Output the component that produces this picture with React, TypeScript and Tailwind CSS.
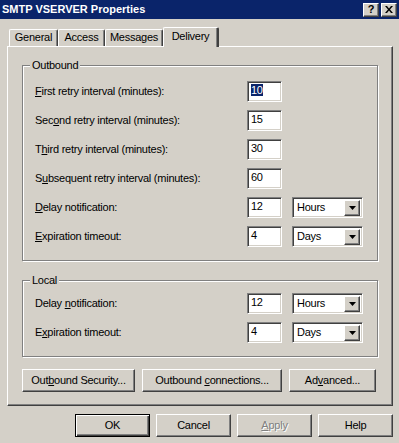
import React from 'react';

const raised =
  'border border-t-white border-l-white border-r-[#404040] border-b-[#404040] shadow-[inset_-1px_-1px_0_#808080]';
const sunken =
  'border border-t-[#808080] border-l-[#808080] border-r-white border-b-white shadow-[inset_1px_1px_0_#404040,inset_-1px_-1px_0_#d4d0c8]';

function U({ children }: { children: React.ReactNode }) {
  return <span className="underline underline-offset-[1px]">{children}</span>;
}

function TextBox({ value, selected }: { value: string; selected?: boolean }) {
  return (
    <div className={`w-[35px] h-[21px] bg-white pl-[3px] pt-[2px] leading-[12px] ${sunken}`}>
      <span className={selected ? 'bg-[#0a246a] text-white' : ''}>{value}</span>
    </div>
  );
}

function Combo({ value }: { value: string }) {
  return (
    <div className={`w-[71px] h-[21px] bg-white flex items-center justify-between pl-[4px] pr-[2px] ${sunken}`}>
      <span>{value}</span>
      <div className={`w-[16px] h-[16px] bg-[#d4d0c8] flex items-center justify-center ${raised}`}>
        <svg width="7" height="4" viewBox="0 0 7 4">
          <path d="M0 0h7L3.5 4z" fill="#000" />
        </svg>
      </div>
    </div>
  );
}

function Row({ label, value, unit, selected }: { label: React.ReactNode; value: string; unit?: string; selected?: boolean }) {
  return (
    <div className="flex items-center h-[21px]">
      <div className="w-[224px] pl-[12px]">{label}</div>
      <TextBox value={value} selected={selected} />
      {unit && (
        <div className="ml-[10px]">
          <Combo value={unit} />
        </div>
      )}
    </div>
  );
}

function GroupBox({ title, className, children }: { title: string; className: string; children: React.ReactNode }) {
  return (
    <div className={`relative w-[356px] border border-[#808080] shadow-[inset_1px_1px_0_#fff,1px_1px_0_#fff] ${className}`}>
      <span className="absolute -top-[8px] left-[7px] px-[2px] bg-[#d4d0c8] leading-[14px]">{title}</span>
      {children}
    </div>
  );
}

function Button({ children, w, isDefault, disabled }: { children: React.ReactNode; w: string; isDefault?: boolean; disabled?: boolean }) {
  const cls = isDefault
    ? 'border border-black shadow-[inset_1px_1px_0_#fff,inset_-1px_-1px_0_#404040,inset_-2px_-2px_0_#808080]'
    : raised;
  return (
    <div className={`${w} h-[23px] flex items-center justify-center bg-[#d4d0c8] ${cls}`}>
      <span className={disabled ? 'text-[#808080] [text-shadow:1px_1px_0_#fff]' : ''}>{children}</span>
    </div>
  );
}

function Tab({ label, w, active }: { label: string; w: string; active?: boolean }) {
  if (active) {
    return (
      <div
        className={`relative z-10 ${w} h-[20px] -mb-[1px] bg-[#d4d0c8] border-l border-t border-white border-r-2 border-r-[#404040] shadow-[inset_-1px_0_0_#808080] rounded-tl-[2px] rounded-tr-[2px] flex justify-center pt-[2px]`}
      >
        {label}
      </div>
    );
  }
  return (
    <div
      className={`${w} h-[17px] bg-[#d4d0c8] border-l border-t border-white border-r border-r-[#404040] shadow-[inset_-1px_0_0_#808080] rounded-tl-[2px] rounded-tr-[2px] flex justify-center pt-[1px]`}
    >
      {label}
    </div>
  );
}

export default function App() {
  return (
    <div className="w-[399px] h-[443px] bg-[#d4d0c8] overflow-hidden text-[11px] leading-[13px] text-black font-['Liberation_Sans',Arial,sans-serif] tracking-[-0.25px]">
      {/* Title bar */}
      <div className="h-[19px] bg-[#0a246a] flex items-center justify-between pl-[2px] pr-[2px]">
        <span className="text-white font-bold text-[11px] tracking-normal">SMTP VSERVER Properties</span>
        <div className="flex gap-[2px]">
          <div className={`w-[16px] h-[14px] bg-[#d4d0c8] flex items-center justify-center font-bold text-[11px] ${raised}`}>?</div>
          <div className={`w-[16px] h-[14px] bg-[#d4d0c8] flex items-center justify-center ${raised}`}>
            <svg width="8" height="7" viewBox="0 0 8 7">
              <path d="M0 0h2l2 2.5L6 0h2L5 3.5 8 7H6L4 4.5 2 7H0l3-3.5z" fill="#000" />
            </svg>
          </div>
        </div>
      </div>

      {/* Tabs */}
      <div className="mt-[8px] h-[19px] flex items-end pl-[9px]">
        <Tab label="General" w="w-[49px]" />
        <Tab label="Access" w="w-[47px]" />
        <Tab label="Messages" w="w-[58px]" />
        <Tab label="Delivery" w="w-[56px]" active />
      </div>

      {/* Panel */}
      <div className="ml-[7px] w-[386px] h-[360px] border border-t-white border-l-white border-r-[#404040] border-b-[#404040] shadow-[inset_-1px_-1px_0_#808080] pl-[14px] pt-[18px]">
        <GroupBox title="Outbound" className="h-[196px] pt-[15px] flex flex-col gap-[8px]">
          <Row label={<><U>F</U>irst retry interval (minutes):</>} value="10" selected />
          <Row label={<>Sec<U>o</U>nd retry interval (minutes):</>} value="15" />
          <Row label={<>T<U>h</U>ird retry interval (minutes):</>} value="30" />
          <Row label={<>S<U>u</U>bsequent retry interval (minutes):</>} value="60" />
          <Row label={<><U>D</U>elay notification:</>} value="12" unit="Hours" />
          <Row label={<><U>E</U>xpiration timeout:</>} value="4" unit="Days" />
        </GroupBox>

        <GroupBox title="Local" className="mt-[19px] h-[77px] pt-[12px] flex flex-col gap-[8px]">
          <Row label={<>Delay <U>n</U>otification:</>} value="12" unit="Hours" />
          <Row label={<>E<U>x</U>piration timeout:</>} value="4" unit="Days" />
        </GroupBox>

        <div className="mt-[12px] flex gap-[7px]">
          <Button w="w-[113px]">Out<U>b</U>ound Security...</Button>
          <Button w="w-[140px]">Outbound <U>c</U>onnections...</Button>
          <Button w="w-[87px]">Ad<U>v</U>anced...</Button>
        </div>
      </div>

      {/* Dialog buttons */}
      <div className="mt-[8px] pl-[75px] flex gap-[6px]">
        <Button w="w-[75px]" isDefault>OK</Button>
        <Button w="w-[75px]">Cancel</Button>
        <Button w="w-[75px]" disabled><U>A</U>pply</Button>
        <Button w="w-[75px]">Help</Button>
      </div>
    </div>
  );
}
